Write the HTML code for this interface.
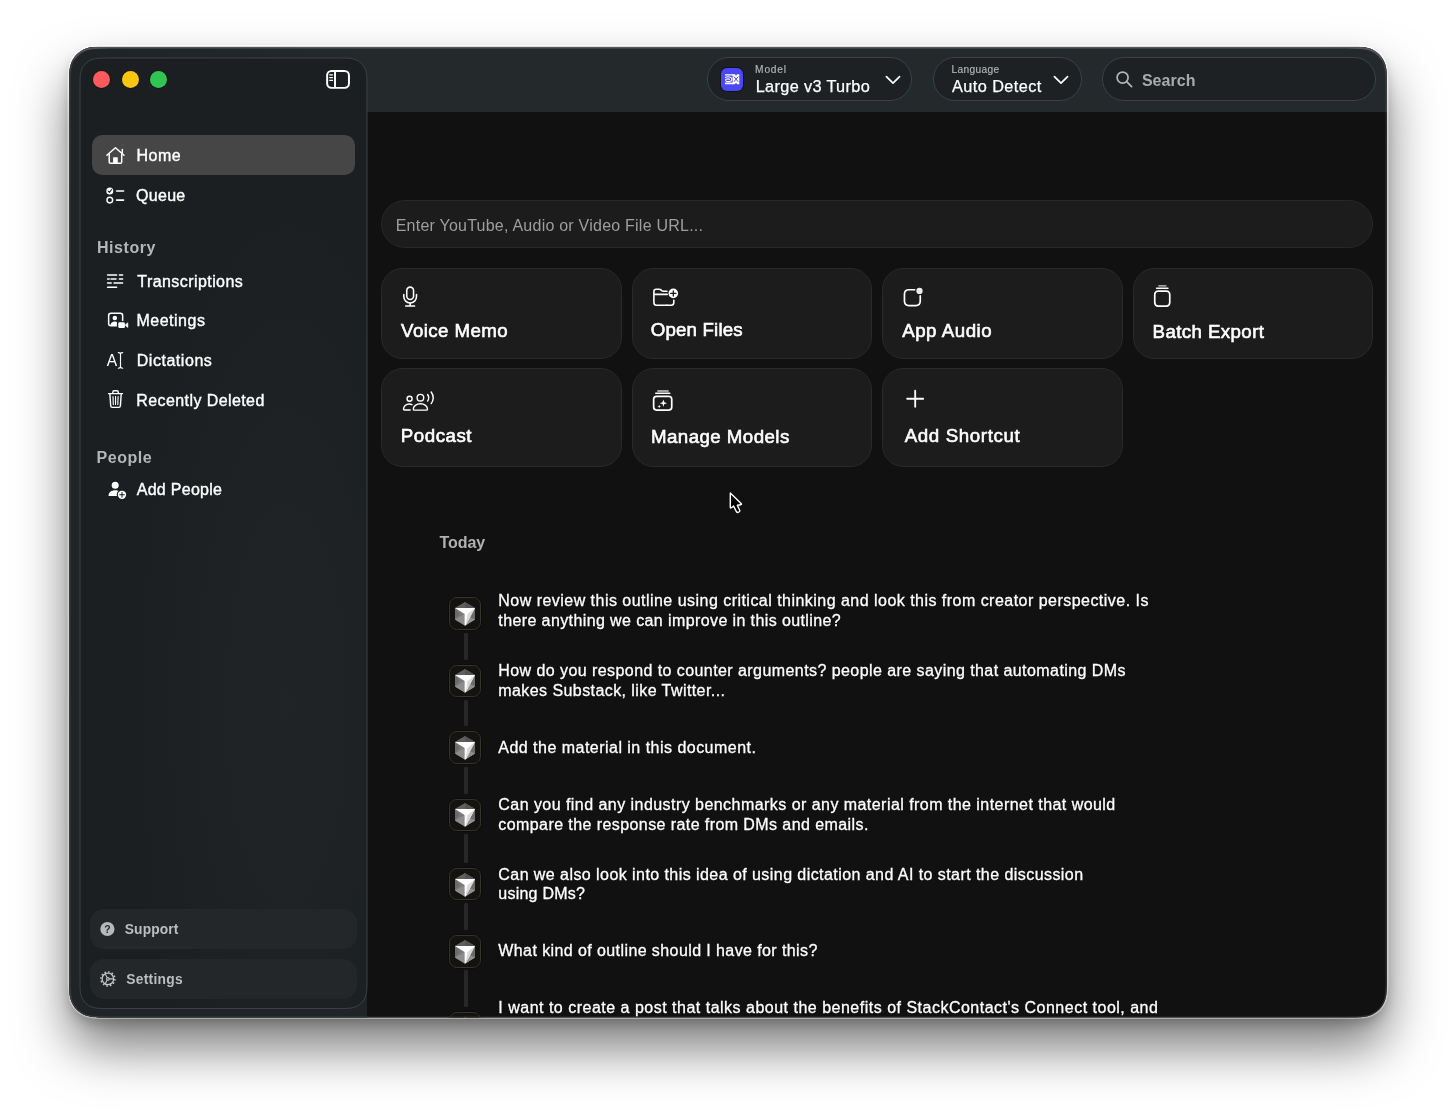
<!DOCTYPE html>
<html lang="en">
<head>
<meta charset="utf-8">
<title>Transcription App</title>
<style>
*{box-sizing:border-box;margin:0;padding:0}
html,body{width:1456px;height:1110px;overflow:hidden;background:#fff}
body{font-family:"Liberation Sans",sans-serif;color:#fff;position:relative}
.abs{position:absolute}
#win{position:absolute;left:69px;top:46.5px;width:1318px;height:971px;background:#111;overflow:hidden;clip-path:path("M41.27 0.00L1276.73 0.00C1288.61 0.00 1294.55 0.00 1299.91 1.77L1300.95 2.02C1307.93 4.56 1313.44 10.07 1315.98 17.05C1318.00 23.45 1318.00 29.39 1318.00 41.27L1318.00 929.73C1318.00 941.61 1318.00 947.55 1316.23 952.91L1315.98 953.95C1313.44 960.93 1307.93 966.44 1300.95 968.98C1294.55 971.00 1288.61 971.00 1276.73 971.00L41.27 971.00C29.39 971.00 23.45 971.00 18.09 969.23L17.05 968.98C10.07 966.44 4.56 960.93 2.02 953.95C0.00 947.55 0.00 941.61 0.00 929.73L0.00 41.27C0.00 29.39 0.00 23.45 1.77 18.09L2.02 17.05C4.56 10.07 10.07 4.56 17.05 2.02C23.45 0.00 29.39 0.00 41.27 0.00Z")}
#toolbar{position:absolute;left:0;top:0;width:100%;height:65px;background:linear-gradient(90deg,#1f2427 0,#1f2427 40px,#24292c 300px)}
#leftcol{position:absolute;left:0;top:65px;width:298px;height:906px;background:#1f2427}
#page{position:absolute;left:-69px;top:-46.5px;width:1456px;height:1110px;will-change:transform}
.t{position:absolute;white-space:nowrap;line-height:1}
.pill{position:absolute;top:57px;height:44px;border-radius:22px;background:#1d2124;border:1px solid #37424a}
.dot{position:absolute;width:17.2px;height:17.2px;border-radius:50%;box-shadow:0 0 0 .8px rgba(0,0,0,.4)}
.bbtn{position:absolute;left:89.5px;width:267.5px;height:39.6px;border-radius:14px;background:#24272a}
.ico{position:absolute;overflow:visible}
.card{position:absolute;width:240.6px;border-radius:21.5px;background:#1c1c1c;border:1px solid #2a2a2a}
.cube{position:absolute;left:449px;width:32.4px;height:32.4px;border-radius:7.5px;background:#15130f;border:1px solid #36342d;box-shadow:0 0 0 .6px rgba(0,0,0,.5)}
.vl{position:absolute;left:464.4px;width:3.9px;background:#272727;border-radius:1.2px}
</style>
</head>
<body>
<svg class="abs" style="left:0;top:0" width="1456" height="1110" viewBox="0 0 1456 1110">
 <defs><linearGradient id="og" x1="0" y1="0" x2="0" y2="1"><stop offset="0" stop-color="#fff" stop-opacity=".8"/><stop offset=".08" stop-color="#fff" stop-opacity=".45"/><stop offset="1" stop-color="#fff" stop-opacity=".4"/></linearGradient></defs>
 <path d="M110.27 46.50L1345.73 46.50C1357.61 46.50 1363.55 46.50 1368.91 48.27L1369.95 48.52C1376.93 51.06 1382.44 56.57 1384.98 63.55C1387.00 69.95 1387.00 75.89 1387.00 87.77L1387.00 976.23C1387.00 988.11 1387.00 994.05 1385.23 999.41L1384.98 1000.45C1382.44 1007.43 1376.93 1012.94 1369.95 1015.48C1363.55 1017.50 1357.61 1017.50 1345.73 1017.50L110.27 1017.50C98.39 1017.50 92.45 1017.50 87.09 1015.73L86.05 1015.48C79.07 1012.94 73.56 1007.43 71.02 1000.45C69.00 994.05 69.00 988.11 69.00 976.23L69.00 87.77C69.00 75.89 69.00 69.95 70.77 64.59L71.02 63.55C73.56 56.57 79.07 51.06 86.05 48.52C92.45 46.50 98.39 46.50 110.27 46.50Z" fill="#111" style="filter:drop-shadow(0 30px 26px rgba(0,0,0,.52))"/>
 <path d="M110.27 46.50L1345.73 46.50C1357.61 46.50 1363.55 46.50 1368.91 48.27L1369.95 48.52C1376.93 51.06 1382.44 56.57 1384.98 63.55C1387.00 69.95 1387.00 75.89 1387.00 87.77L1387.00 976.23C1387.00 988.11 1387.00 994.05 1385.23 999.41L1384.98 1000.45C1382.44 1007.43 1376.93 1012.94 1369.95 1015.48C1363.55 1017.50 1357.61 1017.50 1345.73 1017.50L110.27 1017.50C98.39 1017.50 92.45 1017.50 87.09 1015.73L86.05 1015.48C79.07 1012.94 73.56 1007.43 71.02 1000.45C69.00 994.05 69.00 988.11 69.00 976.23L69.00 87.77C69.00 75.89 69.00 69.95 70.77 64.59L71.02 63.55C73.56 56.57 79.07 51.06 86.05 48.52C92.45 46.50 98.39 46.50 110.27 46.50Z" fill="#111" style="filter:drop-shadow(0 6px 6px rgba(0,0,0,.2))"/>
 <path d="M110.27 46.50L1345.73 46.50C1357.61 46.50 1363.55 46.50 1368.91 48.27L1369.95 48.52C1376.93 51.06 1382.44 56.57 1384.98 63.55C1387.00 69.95 1387.00 75.89 1387.00 87.77L1387.00 976.23C1387.00 988.11 1387.00 994.05 1385.23 999.41L1384.98 1000.45C1382.44 1007.43 1376.93 1012.94 1369.95 1015.48C1363.55 1017.50 1357.61 1017.50 1345.73 1017.50L110.27 1017.50C98.39 1017.50 92.45 1017.50 87.09 1015.73L86.05 1015.48C79.07 1012.94 73.56 1007.43 71.02 1000.45C69.00 994.05 69.00 988.11 69.00 976.23L69.00 87.77C69.00 75.89 69.00 69.95 70.77 64.59L71.02 63.55C73.56 56.57 79.07 51.06 86.05 48.52C92.45 46.50 98.39 46.50 110.27 46.50Z" fill="none" stroke="url(#og)" stroke-width="3"/>
</svg>
<div id="win">
 <div id="toolbar"></div>
 <div id="leftcol"></div>
 <svg class="abs" style="left:0;top:0" width="320" height="971" viewBox="0 0 320 971"><defs><radialGradient id="sg" cx="0.72" cy="0.68" r="0.55"><stop offset="0" stop-color="#212426"/><stop offset="1" stop-color="#1c1f21"/></radialGradient></defs><path d="M40.04 11.00L268.96 11.00C277.32 11.00 281.50 11.00 285.27 12.24L286.00 12.42C290.92 14.21 294.79 18.08 296.58 23.00C298.00 27.50 298.00 31.68 298.00 40.04L298.00 932.46C298.00 940.82 298.00 945.00 296.76 948.77L296.58 949.50C294.79 954.42 290.92 958.29 286.00 960.08C281.50 961.50 277.32 961.50 268.96 961.50L40.04 961.50C31.68 961.50 27.50 961.50 23.73 960.26L23.00 960.08C18.08 958.29 14.21 954.42 12.42 949.50C11.00 945.00 11.00 940.82 11.00 932.46L11.00 40.04C11.00 31.68 11.00 27.50 12.24 23.73L12.42 23.00C14.21 18.08 18.08 14.21 23.00 12.42C27.50 11.00 31.68 11.00 40.04 11.00Z" fill="url(#sg)" stroke="#394347" stroke-width="1"/></svg>
 <div id="page">
<div class="dot" style="left:93.0px;top:70.7px;background:radial-gradient(circle at 50% 50%,#fd5a5e 0,#fd5a5e 58%,#ff5f66 100%)"></div>
<div class="dot" style="left:121.6px;top:70.7px;background:radial-gradient(circle at 50% 50%,#f8c60e 0,#f8c60e 58%,#ffd21c 100%)"></div>
<div class="dot" style="left:150.1px;top:70.7px;background:radial-gradient(circle at 50% 50%,#30c453 0,#30c453 58%,#3ad45f 100%)"></div>
<svg class="ico" style="left:326px;top:70px" width="24" height="19" viewBox="0 0 24 19" fill="none" stroke="#fff" stroke-width="1.95"><rect x="1.15" y="1.05" width="21.8" height="16.8" rx="4.3"/><path d="M9 1.1V17.9"/><path d="M3.7 4.8H6.5M3.7 7.55H6.5M3.7 10.3H6.5" stroke-width="1.3" stroke-linecap="round"/></svg>
<div class="abs" style="left:92px;top:135px;width:262.6px;height:39.6px;border-radius:10.5px;background:#464646"></div>
<span class="t" style="left:136.40px;top:148px;font-size:16px;color:#fff;letter-spacing:0.567px;-webkit-text-stroke:0.38px #fff;">Home</span>
<span class="t" style="left:136.10px;top:188px;font-size:16px;color:#fff;letter-spacing:0.275px;-webkit-text-stroke:0.38px #fff;">Queue</span>
<span class="t" style="left:96.90px;top:240px;font-size:16px;color:#b4b6b7;font-weight:700;letter-spacing:0.567px;">History</span>
<span class="t" style="left:137.30px;top:274px;font-size:16px;color:#fff;letter-spacing:0.431px;-webkit-text-stroke:0.38px #fff;">Transcriptions</span>
<span class="t" style="left:136.40px;top:313px;font-size:16px;color:#fff;letter-spacing:0.514px;-webkit-text-stroke:0.38px #fff;">Meetings</span>
<span class="t" style="left:136.70px;top:353px;font-size:16px;color:#fff;letter-spacing:0.544px;-webkit-text-stroke:0.38px #fff;">Dictations</span>
<span class="t" style="left:136.20px;top:393px;font-size:16px;color:#fff;letter-spacing:0.420px;-webkit-text-stroke:0.38px #fff;">Recently Deleted</span>
<span class="t" style="left:96.60px;top:450px;font-size:16px;color:#b4b6b7;font-weight:700;letter-spacing:0.500px;">People</span>
<span class="t" style="left:136.70px;top:482px;font-size:16px;color:#fff;letter-spacing:0.289px;-webkit-text-stroke:0.38px #fff;">Add People</span>
<div class="bbtn" style="top:909.3px"></div><div class="bbtn" style="top:959px"></div>
<span class="t" style="left:124.80px;top:923px;font-size:13.8px;color:#bcbdbe;font-weight:700;letter-spacing:0.117px;">Support</span>
<span class="t" style="left:126.30px;top:973px;font-size:13.8px;color:#bcbdbe;font-weight:700;letter-spacing:0.286px;">Settings</span>
<svg class="abs" style="left:0;top:0" width="400" height="1110" viewBox="0 0 400 1110"><g fill="none" stroke="#fff" stroke-width="1.5" stroke-linecap="round" stroke-linejoin="round"><path d="M106.9 155.3L115.45 147.7L124.0 155.3"/><path d="M109.2 154.2V161.9Q109.2 163.3 110.6 163.3H120.3Q121.7 163.3 121.7 161.9V154.2"/><path d="M122.3 149.6V152.6"/></g><rect x="113.1" y="157.2" width="4.7" height="6.2" rx=".6" fill="#fff"/><circle cx="109.8" cy="190.9" r="3.5" fill="#fff"/><path d="M108.1 191L109.4 192.4L111.6 189.5" fill="none" stroke="#1d2022" stroke-width="1.1" stroke-linecap="round" stroke-linejoin="round"/><circle cx="109.8" cy="200.1" r="2.85" fill="none" stroke="#fff" stroke-width="1.4"/><path d="M116.6 191H123.6M116.6 200.1H123.6" stroke="#fff" stroke-width="1.6" stroke-linecap="round"/><path d="M107.6 275H116.6M119.4 275H122.6M107.6 279H109.2M111 279H116M119.4 279H122.6M107.6 283.1H111.2M114 283.1H122.6M107.6 287.2H116.6" stroke="#fff" stroke-width="1.5" stroke-linecap="round" fill="none"/><rect x="108.65" y="313.15" width="14" height="12.7" rx="2.3" fill="none" stroke="#fff" stroke-width="1.5"/><circle cx="114.8" cy="317.9" r="2.25" fill="#fff"/><path d="M110.3 325.6C110.6 322.6 112.6 321.4 114.8 321.4C117 321.4 119 322.6 119.3 325.6Z" fill="#fff"/><rect x="116.9" y="320.9" width="12.5" height="8.4" fill="#1d2022"/><rect x="118.3" y="322.3" width="6.6" height="5.7" rx="1.3" fill="#fff"/><path d="M125.6 324.4L127.9 322.8V327.5L125.6 325.9Z" fill="#fff" stroke="#fff" stroke-width=".5" stroke-linejoin="round"/><text x="106.7" y="365.6" font-family="Liberation Sans, sans-serif" font-size="15.6" fill="#fff">A</text><path d="M118.3 352.6C119.6 352.6 120.5 353 120.5 354.2V366.6C120.5 367.8 119.6 368.2 118.3 368.2M122.7 352.6C121.4 352.6 120.5 353 120.5 354.2M122.7 368.2C121.4 368.2 120.5 367.8 120.5 366.6" fill="none" stroke="#fff" stroke-width="1.15" stroke-linecap="round"/><g fill="none" stroke="#fff" stroke-width="1.4" stroke-linecap="round" stroke-linejoin="round"><path d="M108.6 393.6H122.5"/><path d="M112.8 393.4V392.2Q112.8 390.8 114.2 390.8H116.9Q118.3 390.8 118.3 392.2V393.4"/><path d="M109.9 394L110.7 405.8Q110.8 407.4 112.4 407.4H118.7Q120.3 407.4 120.4 405.8L121.2 394"/><path d="M113 396.6L113.3 404.4M115.55 396.6V404.4M118.1 396.6L117.8 404.4" stroke-width="1.1"/></g><circle cx="115.2" cy="485.2" r="3.5" fill="#fff"/><path d="M108.5 496C108.5 492.3 111.5 490.2 115.2 490.2C118.9 490.2 121.9 492.3 121.9 496Z" fill="#fff"/><circle cx="122" cy="494.8" r="5.3" fill="#1d2022"/><circle cx="122" cy="494.8" r="4.15" fill="#fff"/><path d="M119.7 494.8H124.3M122 492.5V497.1" stroke="#1d2022" stroke-width="1.1" stroke-linecap="round"/><circle cx="107.4" cy="929" r="7.1" fill="#b7b8b9"/><text x="107.4" y="932.7" text-anchor="middle" font-family="Liberation Sans, sans-serif" font-weight="700" font-size="10.4" fill="#25282a">?</text><g fill="none" stroke="#c4c5c6"><circle cx="107.9" cy="978.9" r="5.75" stroke-width="1.3"/><circle cx="107.9" cy="978.9" r="7" stroke-width="1.5" stroke-dasharray="1.6 2.065"/><circle cx="107.9" cy="978.9" r="1.3" stroke-width="1.1"/><path d="M109.1 978.9H113.4M107.3 977.85L105.15 974.1M107.3 979.95L105.15 983.7" stroke-width="1.1"/></g></svg>
<div class="pill" style="left:706.7px;width:204.89999999999998px"></div>
<div class="pill" style="left:932.8px;width:149.0px"></div>
<div class="pill" style="left:1102.4px;width:274.0999999999999px"></div>
<div class="abs" style="left:721.3px;top:68px;width:21.7px;height:22.6px;border-radius:5.8px;background:#4a47f5;box-shadow:0 0 0 .8px rgba(0,0,0,.55)"></div>
<svg class="abs" style="left:0;top:0" width="760" height="100" viewBox="0 0 760 100"><path d="M724.9 74.2H733V75.5H724.9Z M724.9 82.6H733V84.2H724.9Z" fill="#fffff2"/><path d="M732.6 74.2H735L736 75.9L737 74.2H739.3V84.2H737L736 82.4L735 84.2H732.6Z" fill="#fffff2"/><path d="M733.9 76.6L738.2 81.8M738.2 76.6L733.9 81.8" stroke="#3a36e8" stroke-width=".9" fill="none"/><path d="M725.3 77.4C727.5 76.4 731.9 76.6 731.9 79.3C731.9 82 726.4 82.3 725.6 80.4C725 78.9 728.6 78.5 729.5 79.4" stroke="#fffff2" stroke-width="1.05" fill="none" stroke-linecap="round"/></svg>
<span class="t" style="left:755.10px;top:65px;font-size:10.2px;color:#b3b6b8;letter-spacing:0.800px;-webkit-text-stroke:0.15px #b3b6b8;">Model</span>
<span class="t" style="left:755.70px;top:78px;font-size:16.3px;color:#fff;letter-spacing:0.346px;-webkit-text-stroke:0.25px #fff;">Large v3 Turbo</span>
<span class="t" style="left:951.50px;top:65px;font-size:10.2px;color:#b3b6b8;letter-spacing:0.343px;-webkit-text-stroke:0.15px #b3b6b8;">Language</span>
<span class="t" style="left:952.05px;top:78px;font-size:16.3px;color:#fff;letter-spacing:0.425px;-webkit-text-stroke:0.25px #fff;">Auto Detect</span>
<svg class="abs" style="left:885.3px;top:75.2px" width="16" height="10" viewBox="0 0 16 10" fill="none" stroke="#fff" stroke-width="1.7" stroke-linecap="round" stroke-linejoin="round"><path d="M1.4 1.6L8 8.1L14.6 1.6"/></svg>
<svg class="abs" style="left:1052.6px;top:75.2px" width="16" height="10" viewBox="0 0 16 10" fill="none" stroke="#fff" stroke-width="1.7" stroke-linecap="round" stroke-linejoin="round"><path d="M1.4 1.6L8 8.1L14.6 1.6"/></svg>
<svg class="abs" style="left:1114.6px;top:70.2px" width="19" height="19" viewBox="0 0 19 19" fill="none" stroke="#b4b6b7" stroke-width="1.7" stroke-linecap="round"><circle cx="7.6" cy="7.6" r="5.5"/><path d="M11.9 11.9L16.6 16.6"/></svg>
<span class="t" style="left:1141.90px;top:73px;font-size:16px;color:#a8aaab;font-weight:700;letter-spacing:0.040px;">Search</span>
<div class="abs" style="left:380.8px;top:200.4px;width:992px;height:47.5px;border-radius:24px;background:#1c1c1c;border:1px solid #282828"></div>
<span class="t" style="left:395.70px;top:218px;font-size:16px;color:#9e9e9e;letter-spacing:0.233px;">Enter YouTube, Audio or Video File URL...</span>
<div class="card" style="left:381px;top:267.8px;height:91.2px"></div>
<div class="card" style="left:631.5px;top:267.8px;height:91.2px"></div>
<div class="card" style="left:882px;top:267.8px;height:91.2px"></div>
<div class="card" style="left:1132.5px;top:267.8px;height:91.2px"></div>
<div class="card" style="left:381px;top:368.2px;height:99.3px"></div>
<div class="card" style="left:631.5px;top:368.2px;height:99.3px"></div>
<div class="card" style="left:882px;top:368.2px;height:99.3px"></div>
<span class="t" style="left:401.10px;top:322px;font-size:18.7px;color:#fff;letter-spacing:0.422px;-webkit-text-stroke:0.6px #fff;">Voice Memo</span>
<span class="t" style="left:650.80px;top:321px;font-size:18.7px;color:#fff;letter-spacing:0.167px;-webkit-text-stroke:0.6px #fff;">Open Files</span>
<span class="t" style="left:902.20px;top:322px;font-size:18.7px;color:#fff;letter-spacing:0.537px;-webkit-text-stroke:0.6px #fff;">App Audio</span>
<span class="t" style="left:1152.60px;top:323px;font-size:18.7px;color:#fff;letter-spacing:0.400px;-webkit-text-stroke:0.6px #fff;">Batch Export</span>
<span class="t" style="left:400.80px;top:427px;font-size:18.7px;color:#fff;letter-spacing:0.533px;-webkit-text-stroke:0.6px #fff;">Podcast</span>
<span class="t" style="left:651.00px;top:428px;font-size:18.7px;color:#fff;letter-spacing:0.442px;-webkit-text-stroke:0.6px #fff;">Manage Models</span>
<span class="t" style="left:904.70px;top:427px;font-size:18.7px;color:#fff;letter-spacing:0.636px;-webkit-text-stroke:0.6px #fff;">Add Shortcut</span>
<svg class="abs" style="left:0;top:0" width="1456" height="500" viewBox="0 0 1456 500"><g fill="none" stroke="#fff" stroke-linecap="round" stroke-linejoin="round" stroke-width="1.55"><rect x="406.75" y="287.1" width="6.8" height="12.4" rx="3.4"/><path d="M403.8 294.4V296.6A6.35 6.35 0 0 0 416.5 296.6V294.4"/><path d="M410.15 303.2V305.8M405.7 305.95H414.6"/></g><g fill="none" stroke="#fff" stroke-linecap="round" stroke-linejoin="round" stroke-width="1.6"><path d="M667.2 305.3H656.6Q653.9 305.3 653.9 302.6V291.4Q653.9 289.2 656.1 289.2H659.2Q660.3 289.2 661 289.9L661.7 290.6Q662.4 291.2 663.5 291.2H667"/><path d="M654.3 294.4H667.2"/><path d="M673.8 300.2V302.6Q673.8 305.3 671.1 305.3H667"/></g><circle cx="673.3" cy="293.4" r="4.8" fill="#fff"/><path d="M670.7 293.4H675.9M673.3 290.8V296" stroke="#1c1c1c" stroke-width="1.3" stroke-linecap="round"/><g fill="none" stroke="#fff" stroke-linecap="round" stroke-linejoin="round" stroke-width="1.7"><path d="M914.6 289.75H909Q904.45 289.75 904.45 294.3V301.1Q904.45 305.65 909 305.65H915.7Q920.25 305.65 920.25 301.1V295.8"/></g><circle cx="919.5" cy="290.9" r="3.15" fill="#ececec"/><g fill="none" stroke="#fff" stroke-linecap="round" stroke-linejoin="round" stroke-width="1.7"><rect x="1154.75" y="291.15" width="15" height="15" rx="3.3"/><path d="M1156.6 288.3H1168" stroke-width="1.4"/><path d="M1158.8 285.8H1166" stroke-width="1.3" stroke="#cfcfcf"/></g><g fill="none" stroke="#fff" stroke-linecap="round" stroke-linejoin="round" stroke-width="1.4"><circle cx="409.6" cy="398.7" r="2.5"/><path d="M412 404.7C411 404.2 410.2 404 409.4 404C406 404 403.5 406.5 403.5 409.3Q403.5 410 404.4 410H410.2"/><circle cx="420.4" cy="397.7" r="3.3"/><path d="M413.3 409.2C413.3 406.2 416.4 403.8 420.4 403.8C424.4 403.8 427.5 406.2 427.5 409.2Q427.5 410.1 426.5 410.1H414.3Q413.3 410.1 413.3 409.2Z"/><path d="M427.6 394.5C428.9 396.4 428.9 399.2 427.6 401.1M431.2 392C433.7 395.6 433.7 400 431.2 403.6"/></g><g fill="none" stroke="#fff" stroke-linecap="round" stroke-linejoin="round" stroke-width="1.7"><rect x="653.65" y="396.35" width="18.1" height="13.7" rx="3"/><path d="M655.7 393.3H669.8" stroke-width="1.4"/><path d="M657.8 391H668.2" stroke-width="1.3" stroke="#cfcfcf"/></g><path d="M663.4 399.6L664.35 402.3L667.1 403.2L664.35 404.1L663.4 406.8L662.45 404.1L659.7 403.2L662.45 402.3Z" fill="#fff"/><path d="M659.2 404.8L659.7 406L660.9 406.5L659.7 407L659.2 408.2L658.7 407L657.5 406.5L658.7 406Z" fill="#fff"/><path d="M907.2 398.75H923.2M915.2 390.7V406.8" fill="none" stroke="#fff" stroke-linecap="round" stroke-linejoin="round" stroke-width="1.85"/></svg>
<span class="t" style="left:439.60px;top:535px;font-size:16px;color:#b2b2b2;font-weight:700;letter-spacing:-0.075px;">Today</span>
<div class="cube" style="top:597.4px"></div><svg class="abs" style="left:454.2px;top:601.0px" width="22" height="26" viewBox="0 0 22 26"><polygon points="11,1.2 21,6.9 21,18.5 11,24.6 1,18.5 1,6.9" fill="#727272"/><polygon points="11,1.2 21,6.9 1,6.9" fill="#606060"/><polygon points="11,1.2 11,6.9 21,6.9" fill="#545454"/><polygon points="1,6.9 10.6,13.1 10.6,24.2 1,18.5" fill="#7a7a7a"/><polygon points="1,18.5 10.6,13.1 10.6,24.2" fill="#8d8d8d"/><polygon points="1,6.9 1,18.5 5.5,12.8" fill="#6b6b6b"/><polygon points="21,6.9 21,18.5 11.4,24.4" fill="#6c6c6c"/><polygon points="21,18.5 15.2,15.8 11.4,24.4" fill="#909090"/><polygon points="1,6.9 21,6.9 11.6,24.6 10.6,24.4 10.6,13.1" fill="#fff"/><polygon points="21,6.9 11.6,24.6 13.4,13.3" fill="#dadada"/></svg>
<div class="vl" style="top:632.5px;height:27.2px"></div>
<span class="t" style="left:498.30px;top:593px;font-size:16px;color:#fff;letter-spacing:0.470px;-webkit-text-stroke:0.3px #fff;">Now review this outline using critical thinking and look this from creator perspective. Is</span>
<span class="t" style="left:498.30px;top:613px;font-size:16px;color:#fff;letter-spacing:0.396px;-webkit-text-stroke:0.3px #fff;">there anything we can improve in this outline?</span>
<div class="cube" style="top:664.7px"></div><svg class="abs" style="left:454.2px;top:668.3px" width="22" height="26" viewBox="0 0 22 26"><polygon points="11,1.2 21,6.9 21,18.5 11,24.6 1,18.5 1,6.9" fill="#727272"/><polygon points="11,1.2 21,6.9 1,6.9" fill="#606060"/><polygon points="11,1.2 11,6.9 21,6.9" fill="#545454"/><polygon points="1,6.9 10.6,13.1 10.6,24.2 1,18.5" fill="#7a7a7a"/><polygon points="1,18.5 10.6,13.1 10.6,24.2" fill="#8d8d8d"/><polygon points="1,6.9 1,18.5 5.5,12.8" fill="#6b6b6b"/><polygon points="21,6.9 21,18.5 11.4,24.4" fill="#6c6c6c"/><polygon points="21,18.5 15.2,15.8 11.4,24.4" fill="#909090"/><polygon points="1,6.9 21,6.9 11.6,24.6 10.6,24.4 10.6,13.1" fill="#fff"/><polygon points="21,6.9 11.6,24.6 13.4,13.3" fill="#dadada"/></svg>
<div class="vl" style="top:699.8px;height:26.6px"></div>
<span class="t" style="left:498.30px;top:663px;font-size:16px;color:#fff;letter-spacing:0.430px;-webkit-text-stroke:0.3px #fff;">How do you respond to counter arguments? people are saying that automating DMs</span>
<span class="t" style="left:498.30px;top:683px;font-size:16px;color:#fff;letter-spacing:0.423px;-webkit-text-stroke:0.3px #fff;">makes Substack, like Twitter...</span>
<div class="cube" style="top:731.4px"></div><svg class="abs" style="left:454.2px;top:735.0px" width="22" height="26" viewBox="0 0 22 26"><polygon points="11,1.2 21,6.9 21,18.5 11,24.6 1,18.5 1,6.9" fill="#727272"/><polygon points="11,1.2 21,6.9 1,6.9" fill="#606060"/><polygon points="11,1.2 11,6.9 21,6.9" fill="#545454"/><polygon points="1,6.9 10.6,13.1 10.6,24.2 1,18.5" fill="#7a7a7a"/><polygon points="1,18.5 10.6,13.1 10.6,24.2" fill="#8d8d8d"/><polygon points="1,6.9 1,18.5 5.5,12.8" fill="#6b6b6b"/><polygon points="21,6.9 21,18.5 11.4,24.4" fill="#6c6c6c"/><polygon points="21,18.5 15.2,15.8 11.4,24.4" fill="#909090"/><polygon points="1,6.9 21,6.9 11.6,24.6 10.6,24.4 10.6,13.1" fill="#fff"/><polygon points="21,6.9 11.6,24.6 13.4,13.3" fill="#dadada"/></svg>
<div class="vl" style="top:766.5px;height:27.0px"></div>
<span class="t" style="left:498.30px;top:740px;font-size:16px;color:#fff;letter-spacing:0.476px;-webkit-text-stroke:0.3px #fff;">Add the material in this document.</span>
<div class="cube" style="top:798.5px"></div><svg class="abs" style="left:454.2px;top:802.1px" width="22" height="26" viewBox="0 0 22 26"><polygon points="11,1.2 21,6.9 21,18.5 11,24.6 1,18.5 1,6.9" fill="#727272"/><polygon points="11,1.2 21,6.9 1,6.9" fill="#606060"/><polygon points="11,1.2 11,6.9 21,6.9" fill="#545454"/><polygon points="1,6.9 10.6,13.1 10.6,24.2 1,18.5" fill="#7a7a7a"/><polygon points="1,18.5 10.6,13.1 10.6,24.2" fill="#8d8d8d"/><polygon points="1,6.9 1,18.5 5.5,12.8" fill="#6b6b6b"/><polygon points="21,6.9 21,18.5 11.4,24.4" fill="#6c6c6c"/><polygon points="21,18.5 15.2,15.8 11.4,24.4" fill="#909090"/><polygon points="1,6.9 21,6.9 11.6,24.6 10.6,24.4 10.6,13.1" fill="#fff"/><polygon points="21,6.9 11.6,24.6 13.4,13.3" fill="#dadada"/></svg>
<div class="vl" style="top:833.6px;height:29.4px"></div>
<span class="t" style="left:498.30px;top:797px;font-size:16px;color:#fff;letter-spacing:0.453px;-webkit-text-stroke:0.3px #fff;">Can you find any industry benchmarks or any material from the internet that would</span>
<span class="t" style="left:498.30px;top:817px;font-size:16px;color:#fff;letter-spacing:0.418px;-webkit-text-stroke:0.3px #fff;">compare the response rate from DMs and emails.</span>
<div class="cube" style="top:868.0px"></div><svg class="abs" style="left:454.2px;top:871.6px" width="22" height="26" viewBox="0 0 22 26"><polygon points="11,1.2 21,6.9 21,18.5 11,24.6 1,18.5 1,6.9" fill="#727272"/><polygon points="11,1.2 21,6.9 1,6.9" fill="#606060"/><polygon points="11,1.2 11,6.9 21,6.9" fill="#545454"/><polygon points="1,6.9 10.6,13.1 10.6,24.2 1,18.5" fill="#7a7a7a"/><polygon points="1,18.5 10.6,13.1 10.6,24.2" fill="#8d8d8d"/><polygon points="1,6.9 1,18.5 5.5,12.8" fill="#6b6b6b"/><polygon points="21,6.9 21,18.5 11.4,24.4" fill="#6c6c6c"/><polygon points="21,18.5 15.2,15.8 11.4,24.4" fill="#909090"/><polygon points="1,6.9 21,6.9 11.6,24.6 10.6,24.4 10.6,13.1" fill="#fff"/><polygon points="21,6.9 11.6,24.6 13.4,13.3" fill="#dadada"/></svg>
<div class="vl" style="top:903.1px;height:27.2px"></div>
<span class="t" style="left:498.30px;top:867px;font-size:16px;color:#fff;letter-spacing:0.439px;-webkit-text-stroke:0.3px #fff;">Can we also look into this idea of using dictation and AI to start the discussion</span>
<span class="t" style="left:498.30px;top:886px;font-size:16px;color:#fff;letter-spacing:0.244px;-webkit-text-stroke:0.3px #fff;">using DMs?</span>
<div class="cube" style="top:935.3px"></div><svg class="abs" style="left:454.2px;top:938.9px" width="22" height="26" viewBox="0 0 22 26"><polygon points="11,1.2 21,6.9 21,18.5 11,24.6 1,18.5 1,6.9" fill="#727272"/><polygon points="11,1.2 21,6.9 1,6.9" fill="#606060"/><polygon points="11,1.2 11,6.9 21,6.9" fill="#545454"/><polygon points="1,6.9 10.6,13.1 10.6,24.2 1,18.5" fill="#7a7a7a"/><polygon points="1,18.5 10.6,13.1 10.6,24.2" fill="#8d8d8d"/><polygon points="1,6.9 1,18.5 5.5,12.8" fill="#6b6b6b"/><polygon points="21,6.9 21,18.5 11.4,24.4" fill="#6c6c6c"/><polygon points="21,18.5 15.2,15.8 11.4,24.4" fill="#909090"/><polygon points="1,6.9 21,6.9 11.6,24.6 10.6,24.4 10.6,13.1" fill="#fff"/><polygon points="21,6.9 11.6,24.6 13.4,13.3" fill="#dadada"/></svg>
<div class="vl" style="top:970.4px;height:36.8px"></div>
<span class="t" style="left:498.30px;top:943px;font-size:16px;color:#fff;letter-spacing:0.409px;-webkit-text-stroke:0.3px #fff;">What kind of outline should I have for this?</span>
<div class="cube" style="top:1012.2px"></div><svg class="abs" style="left:454.2px;top:1015.8px" width="22" height="26" viewBox="0 0 22 26"><polygon points="11,1.2 21,6.9 21,18.5 11,24.6 1,18.5 1,6.9" fill="#727272"/><polygon points="11,1.2 21,6.9 1,6.9" fill="#606060"/><polygon points="11,1.2 11,6.9 21,6.9" fill="#545454"/><polygon points="1,6.9 10.6,13.1 10.6,24.2 1,18.5" fill="#7a7a7a"/><polygon points="1,18.5 10.6,13.1 10.6,24.2" fill="#8d8d8d"/><polygon points="1,6.9 1,18.5 5.5,12.8" fill="#6b6b6b"/><polygon points="21,6.9 21,18.5 11.4,24.4" fill="#6c6c6c"/><polygon points="21,18.5 15.2,15.8 11.4,24.4" fill="#909090"/><polygon points="1,6.9 21,6.9 11.6,24.6 10.6,24.4 10.6,13.1" fill="#fff"/><polygon points="21,6.9 11.6,24.6 13.4,13.3" fill="#dadada"/></svg>
<span class="t" style="left:498.30px;top:1000px;font-size:16px;color:#fff;letter-spacing:0.497px;-webkit-text-stroke:0.3px #fff;">I want to create a post that talks about the benefits of StackContact's Connect tool, and</span>
<svg class="abs" style="left:0;top:0" width="760" height="520" viewBox="0 0 760 520"><path d="M730.3 492.9V507.2Q730.3 508.4 731.3 507.7L733.6 506.1L736.3 511.5Q737.2 512.9 738.7 512.2Q740.2 511.4 739.6 510L737.3 505.3L740.7 504.8Q742 504.5 741.1 503.6Z" fill="#000" stroke="#fff" stroke-width="1.4" stroke-linejoin="round"/></svg>
 </div>
 <svg class="abs" style="left:0;top:0" width="1318" height="971" viewBox="0 0 1318 971"><path d="M41.27 0.00L1276.73 0.00C1288.61 0.00 1294.55 0.00 1299.91 1.77L1300.95 2.02C1307.93 4.56 1313.44 10.07 1315.98 17.05C1318.00 23.45 1318.00 29.39 1318.00 41.27L1318.00 929.73C1318.00 941.61 1318.00 947.55 1316.23 952.91L1315.98 953.95C1313.44 960.93 1307.93 966.44 1300.95 968.98C1294.55 971.00 1288.61 971.00 1276.73 971.00L41.27 971.00C29.39 971.00 23.45 971.00 18.09 969.23L17.05 968.98C10.07 966.44 4.56 960.93 2.02 953.95C0.00 947.55 0.00 941.61 0.00 929.73L0.00 41.27C0.00 29.39 0.00 23.45 1.77 18.09L2.02 17.05C4.56 10.07 10.07 4.56 17.05 2.02C23.45 0.00 29.39 0.00 41.27 0.00Z" fill="none" stroke="rgba(255,255,255,.11)" stroke-width="3"/><path d="M41.27 0.00L1276.73 0.00C1288.61 0.00 1294.55 0.00 1299.91 1.77L1300.95 2.02C1307.93 4.56 1313.44 10.07 1315.98 17.05C1318.00 23.45 1318.00 29.39 1318.00 41.27L1318.00 929.73C1318.00 941.61 1318.00 947.55 1316.23 952.91L1315.98 953.95C1313.44 960.93 1307.93 966.44 1300.95 968.98C1294.55 971.00 1288.61 971.00 1276.73 971.00L41.27 971.00C29.39 971.00 23.45 971.00 18.09 969.23L17.05 968.98C10.07 966.44 4.56 960.93 2.02 953.95C0.00 947.55 0.00 941.61 0.00 929.73L0.00 41.27C0.00 29.39 0.00 23.45 1.77 18.09L2.02 17.05C4.56 10.07 10.07 4.56 17.05 2.02C23.45 0.00 29.39 0.00 41.27 0.00Z" fill="none" stroke="rgba(255,255,255,.13)" stroke-width="2" transform="translate(0,.5)" clip-path="inset(0 0 960px 0)"/></svg>
</div>
</body>
</html>
